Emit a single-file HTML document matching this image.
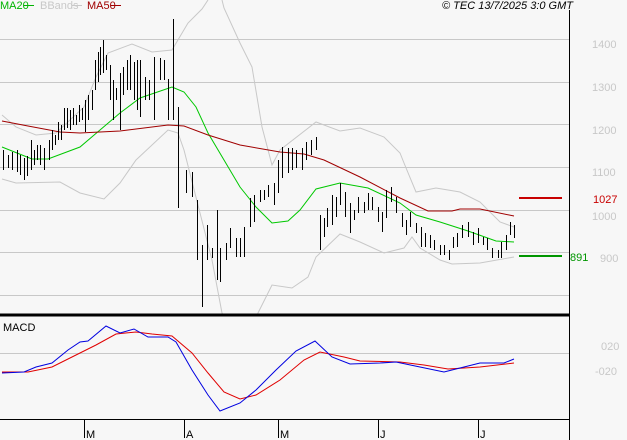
<!DOCTYPE html>
<html><head><meta charset="utf-8"><style>
html,body{margin:0;padding:0;background:#f7f7f7;width:627px;height:440px;overflow:hidden}
svg{display:block}
text{font-family:"Liberation Sans",sans-serif;font-size:11px}
</style></head><body>
<svg width="627" height="440" xmlns="http://www.w3.org/2000/svg">
<rect width="627" height="440" fill="#f7f7f7"/>
<g stroke="#c8c8c8" stroke-width="1">
<line x1="0" y1="39.5" x2="569" y2="39.5"/><line x1="0" y1="82.5" x2="569" y2="82.5"/>
<line x1="0" y1="124.5" x2="569" y2="124.5"/><line x1="0" y1="167.5" x2="569" y2="167.5"/>
<line x1="0" y1="210.5" x2="569" y2="210.5"/><line x1="0" y1="252.5" x2="569" y2="252.5"/>
<line x1="0" y1="295.5" x2="569" y2="295.5"/><line x1="0" y1="353.5" x2="569" y2="353.5"/>
</g>
<g fill="none" stroke="#c8c8c8" stroke-width="1">
<polyline points="2,115 16,127 36,135 56,133 84,107 96,77 108,53 132,44 152,52 172,50 188,23 202,9 208,0"/>
<polyline points="222,0 224,8 240,43 252,67 262,127 272,165 280,150 316,122 340,131 360,128 384,137 400,153 404,163 416,192 436,188 460,192 480,202 500,222 514,227"/>
<polyline points="2,179 16,183 60,182 80,193 104,199 120,183 136,160 168,130 178,133 184,150 200,213 212,260 222,313 224,316"/>
<polyline points="257,316 258,313 272,285 292,288 308,277 316,257 340,234 360,242 384,253 404,248 412,237 420,248 440,260 452,264 480,263 514,257"/>
</g>
<polyline fill="none" stroke="#00c800" stroke-width="1" points="2,147 32,159 48,159 80,147 100,130 120,113 140,98 172,87 184,92 196,107 208,133 224,160 240,187 256,207 272,223 288,221 300,210 316,189 340,183 368,188 400,203 416,215 440,222 468,231 496,241 514,242"/>
<polyline fill="none" stroke="#a00000" stroke-width="1" points="2,121 28,126 60,132 80,133 120,131 168,125 184,126 208,135 240,145 280,152 304,154 324,160 360,177 400,198 428,211 452,211 460,209 480,209 514,216"/>
<g stroke="#000" stroke-width="1">
<path d="M3.5 150V170M8.5 155V168M12.5 152V170M17.5 150V172M20.5 155V175M24.5 158V180M27.5 156V176M31.5 140V170M34.5 150V165M37.5 145V160M40.5 145V165M44.5 148V170M49.5 140V160M52.5 130V150M55.5 135V145M58.5 122V140M61.5 125V140M64.5 108V130M67.5 108V128M70.5 110V130M73.5 108V125M76.5 115V125M79.5 105V122M82.5 108V120M85.5 100V132M88.5 95V120M92.5 90V110M95.5 60V90M98.5 52V82M100.5 47V75M103.5 40V73M106.5 55V70M110.5 65V100M113.5 80V120M116.5 88V100M120.5 73V130M123.5 67V95M127.5 60V90M130.5 55V90M134.5 62V100M137.5 60V110M140.5 60V117M145.5 77V100M149.5 80V100M154.5 57V120M160.5 58V80M164.5 60V80M168.5 79V120M173.5 19V120"/>
<path d="M178.5 107V208M186.5 170V193M192.5 172V197M197.5 200V260M202.5 245V307M207.5 225V260M212.5 248V258M217.5 210V280M220.5 248V282M226.5 243V260M230.5 228V248M236.5 238V257M240.5 238V257M244.5 227V257M250.5 198V227M254.5 195V222M260.5 190V202M264.5 190V200M268.5 185V197M274.5 183V205M278.5 160V193M282.5 147V178M288.5 148V173M292.5 148V170M296.5 150V168M302.5 148V170M306.5 142V160M311.5 140V155M316.5 137V150"/>
<path d="M320.5 215V250M324.5 218V237M327.5 208V227M332.5 195V225M336.5 197V217M340.5 183V205M345.5 192V217M350.5 203V233M354.5 210V220M358.5 197V213M364.5 202V213M368.5 193V210M372.5 197V210M378.5 207V222M382.5 212V232M386.5 190V218M391.5 187V202M396.5 197V213M402.5 213V227M406.5 220V235M410.5 212V227M416.5 223V233M421.5 227V247M425.5 233V247M430.5 235V248M434.5 240V250M440.5 245V255M444.5 245V255M449.5 250V260M453.5 237V248M457.5 233V247M462.5 225V238M468.5 222V237M473.5 232V245M478.5 228V243M483.5 237V245M487.5 238V250M492.5 248V258M498.5 250V258M501.5 242V258M506.5 235V250M510.5 222V235M514.5 225V238"/>
</g>
<line x1="519" y1="198" x2="562" y2="198" stroke="#c80000" stroke-width="2"/>
<line x1="519" y1="256" x2="562" y2="256" stroke="#009600" stroke-width="2"/>
<polyline fill="none" stroke="#e00000" stroke-width="1" points="2,372 28,372 52,367 72,357 96,345 116,334 136,332 152,334 172,336 192,353 208,373 224,392 240,399 256,395 280,380 304,360 320,352 344,357 360,361 400,362 424,365 448,369 480,367 514,363"/>
<polyline fill="none" stroke="#0000e0" stroke-width="1" points="2,373 24,372 36,367 52,363 68,350 80,342 88,341 106,326 120,333 134,329 148,337 168,337 176,342 192,370 208,395 220,411 240,403 256,390 276,370 296,351 315,341 332,357 350,364 380,363 396,362 420,367 444,372 464,367 480,363 504,363 514,359"/>
<line x1="0" y1="315" x2="569" y2="315" stroke="#000" stroke-width="3"/>
<line x1="0" y1="419.5" x2="569" y2="419.5" stroke="#000" stroke-width="1"/>
<line x1="569.5" y1="10" x2="569.5" y2="440" stroke="#000" stroke-width="1"/>
<g stroke="#000" stroke-width="1">
<line x1="84.5" y1="420" x2="84.5" y2="438"/><line x1="184.5" y1="420" x2="184.5" y2="438"/>
<line x1="278.5" y1="420" x2="278.5" y2="438"/><line x1="378.5" y1="420" x2="378.5" y2="438"/>
<line x1="478.5" y1="420" x2="478.5" y2="438"/>
</g>
<g font-size="11" fill="#000">
<text x="86" y="438">M</text><text x="186" y="438">A</text><text x="280" y="438">M</text><text x="380" y="438">J</text><text x="480" y="438">J</text>
</g>
<text x="3" y="331" font-size="10" fill="#000">MACD</text>
<g fill="#c8c8c8" font-size="12">
<text x="592" y="48">1400</text><text x="592" y="91">1300</text><text x="592" y="134">1200</text>
<text x="592" y="176">1100</text><text x="592" y="220">1000</text><text x="600" y="262">900</text>
<text x="601" y="350">020</text><text x="595" y="375">-020</text>
</g>
<text x="593" y="203" font-size="12" fill="#c80000">1027</text>
<text x="570" y="261" font-size="12" fill="#009600">891</text>
<text x="0" y="9" font-size="10" fill="#00b400">MA20</text>
<line x1="24" y1="5.5" x2="34" y2="5.5" stroke="#00b400"/>
<text x="40" y="9" font-size="10" fill="#c8c8c8">BBands</text>
<line x1="72" y1="5.5" x2="82" y2="5.5" stroke="#c8c8c8"/>
<text x="87" y="9" font-size="10" fill="#a00000">MA50</text>
<line x1="111" y1="5.5" x2="121" y2="5.5" stroke="#a00000"/>
<text x="573" y="9" font-size="10" font-style="italic" fill="#000" text-anchor="end">© TEC 13/7/2025 3:0 GMT</text>
</svg>
</body></html>
